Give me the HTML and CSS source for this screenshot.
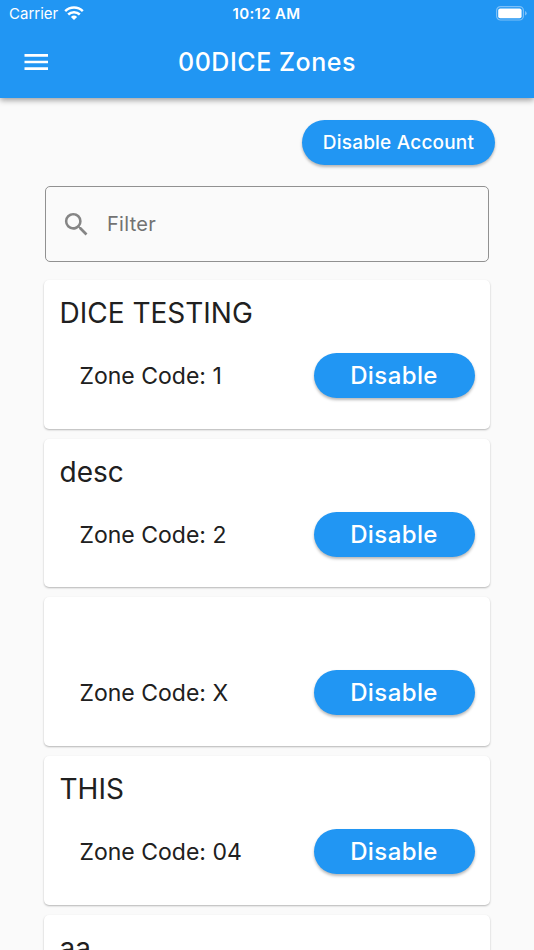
FILE: index.html
```html
<!DOCTYPE html>
<html lang="en">
<head>
<meta charset="utf-8">
<title>00DICE Zones</title>
<link rel="stylesheet" href="styles.css">
</head>
<body>
<header class="appbar">
  <div class="status">
    <div class="carrier"><span class="carrier-name">Carrier</span>
      <svg class="wifi" width="20" height="14" viewBox="0 0 20 14"><path d="M1.2 5.2a12.6 12.6 0 0 1 17.6 0M4.2 8.5a8.3 8.3 0 0 1 11.6 0" fill="none" stroke="#fff" stroke-width="2.5"/><path d="M10 14l-3.1-3a4.6 4.6 0 0 1 6.2 0z" fill="#fff"/></svg>
    </div>
    <span class="time">10:12 AM</span>
    <svg class="battery" width="32" height="15" viewBox="0 0 32 15"><rect x=".6" y=".6" width="26.8" height="13.4" rx="4" fill="none" stroke="#7cc0f8" stroke-width="1.2"/><rect x="2.2" y="2.4" width="23.4" height="9.8" rx="2" fill="#fff"/><path d="M29 5q1.7.7 1.7 2.3T29 9.6z" fill="#7cc0f8"/></svg>
  </div>
  <div class="toolbar">
    <svg class="menu" width="24" height="16" viewBox="0 0 24 16"><path d="M.5 1.4h23.5M.5 8h23.5M.5 14.6h23.5" stroke="#fff" stroke-width="2.7"/></svg>
    <h1 class="title">00DICE Zones</h1>
  </div>
</header>
<main class="content">
  <button class="btn account">Disable Account</button>
  <div class="filter">
    <svg width="31" height="31" viewBox="0 0 24 24"><path fill="#858585" d="M15.5 14h-.79l-.28-.27A6.47 6.47 0 0 0 16 9.5 6.5 6.5 0 1 0 9.5 16c1.61 0 3.09-.59 4.23-1.57l.27.28v.79l5 4.99L20.49 19l-4.99-5zm-6 0C7.01 14 5 11.99 5 9.5S7.01 5 9.5 5 14 7.01 14 9.5 11.99 14 9.5 14z"/></svg>
    <span class="filter-label">Filter</span>
  </div>
  <section class="card"><h2 class="name">DICE TESTING</h2><div class="row"><span class="code">Zone Code: 1</span><button class="btn disable">Disable</button></div></section>
  <section class="card"><h2 class="name">desc</h2><div class="row"><span class="code">Zone Code: 2</span><button class="btn disable">Disable</button></div></section>
  <section class="card"><h2 class="name"></h2><div class="row"><span class="code">Zone Code: X</span><button class="btn disable">Disable</button></div></section>
  <section class="card"><h2 class="name">THIS</h2><div class="row"><span class="code">Zone Code: 04</span><button class="btn disable">Disable</button></div></section>
  <section class="card"><h2 class="name">aa</h2></section>
</main>
</body>
</html>
```
FILE: styles.css
```css
* { box-sizing: border-box; }
body { margin: 0; height: 950px; overflow: hidden; display: flex; flex-direction: column; background: #fafafa; font-family: Inter, sans-serif; color: #202020; }
.appbar { flex: none; height: 98px; background: #2196f3; color: #fff; box-shadow: 0 2px 6px rgba(0,0,0,.4); }
.status { height: 27px; display: grid; grid-template-columns: 1fr auto 1fr; align-items: center; padding: 0 6px 0 9px; font-size: 15px; }
.carrier { display: flex; align-items: center; gap: 6px; }
.wifi { margin-top: -1px; }
.time { font-weight: 600; font-size: 15px; letter-spacing: .35px; margin-left: -4px; }
.battery { justify-self: end; }
.toolbar { height: 70px; display: grid; grid-template-columns: 1fr auto 1fr; align-items: center; padding: 0 24px; }
.title { margin: 0; font-size: 25px; font-weight: 500; letter-spacing: .55px; }
.content { flex: 1; min-height: 0; overflow: hidden; padding: 21.5px 44px 0; display: flex; flex-direction: column; }
.btn { border: 0; border-radius: 23px; background: #2196f3; color: #fff; font-family: inherit; font-weight: 500; padding: 0; box-shadow: 0 2px 3px rgba(0,0,0,.28); white-space: nowrap; flex: none; }
.account { align-self: flex-end; width: 193px; height: 45px; margin-right: -5px; font-size: 19px; letter-spacing: .2px; }
.filter { flex: none; height: 76px; margin: 21.5px 1px 0; border: 1px solid #919191; border-radius: 5px; display: flex; align-items: center; padding-left: 15px; color: #727272; font-size: 20px; letter-spacing: .3px; }
.filter-label { margin-left: 15px; }
.card { height: 148.7px; flex: none; margin-top: 10px; background: #fff; border-radius: 5px; box-shadow: 0 1px 2px rgba(0,0,0,.28); padding: 16px 15.5px 0 15.5px; }
.filter + .card { margin-top: 18px; }
.name { margin: 0; height: 34px; line-height: 35px; font-size: 28px; font-weight: 400; }
.row { display: flex; align-items: center; justify-content: space-between; height: 45px; margin-top: 23px; padding-left: 20px; }
.code { font-size: 23px; padding-top: 1px; }
.disable { width: 161px; height: 45px; font-size: 24px; letter-spacing: .4px; }
```
